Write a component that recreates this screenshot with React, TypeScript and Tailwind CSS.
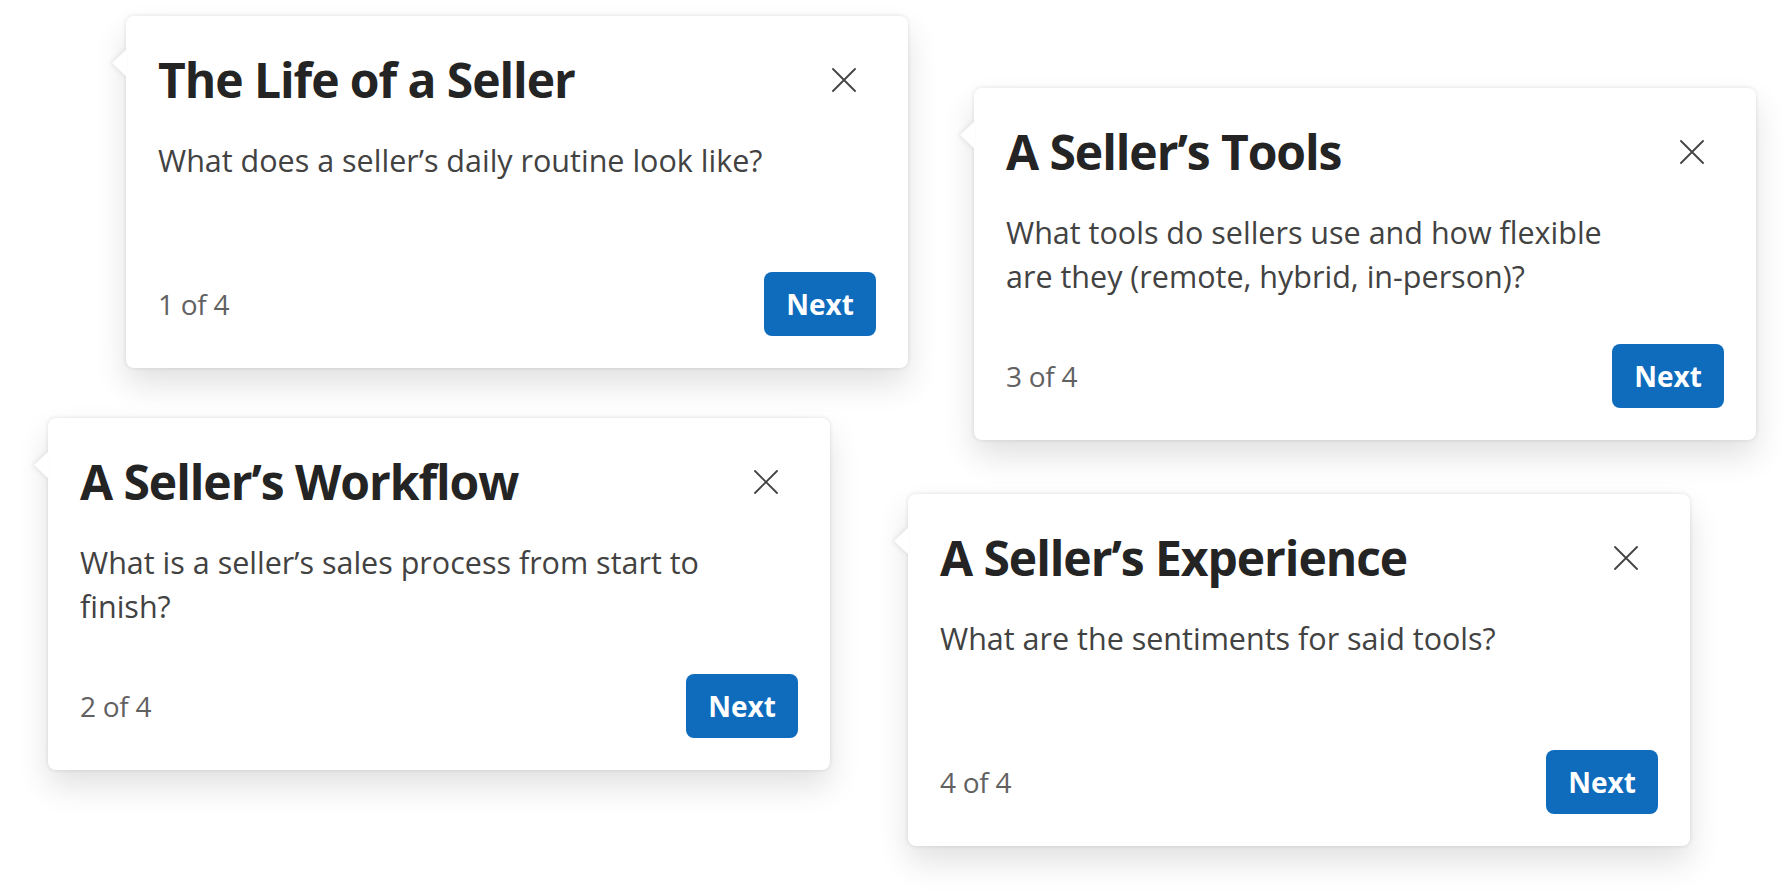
import { ReactNode } from 'react'

interface TeachingCardProps {
  title: string
  body: ReactNode
  step: number
  total?: number
  className?: string
}

function DismissIcon() {
  return (
    <svg width="24" height="24" viewBox="0 0 24 24" fill="none">
      <path d="M1 1L23 23M23 1L1 23" stroke="currentColor" strokeWidth="1.8" strokeLinecap="round" />
    </svg>
  )
}

function TeachingCard({ title, body, step, total = 4, className = '' }: TeachingCardProps) {
  return (
    <div
      className={`relative flex h-[352px] w-[782px] shrink-0 flex-col rounded-[8px] bg-white p-8 shadow-[0_0_4px_rgba(0,0,0,0.12),0_16px_32px_rgba(0,0,0,0.12)] ${className}`}
    >
      <div className="flex items-start justify-between">
        <h2 className="text-[48px] leading-[64px] font-bold tracking-[-0.022em] text-[#242424]">{title}</h2>
        <button className="flex h-16 w-16 items-center justify-center text-[#424242]">
          <DismissIcon />
        </button>
      </div>
      <p className="mt-[26px] max-w-[630px] text-[30.5px] leading-[44px] text-[#424242]">{body}</p>
      <div className="mt-auto flex items-center justify-between">
        <span className="text-[28px] leading-[40px] tracking-[-0.01em] text-[#616161]">
          {step} of {total}
        </span>
        <button className="flex h-16 w-[112px] items-center justify-center rounded-[8px] bg-[#0f6cbd] text-[28px] font-bold text-white">
          Next
        </button>
      </div>
      {/* beak */}
      <div className="absolute top-[33px] left-[-14px] h-[28px] w-[15px] drop-shadow-[-2px_0_2px_rgba(0,0,0,0.08)]">
        <div className="h-full w-full bg-white [clip-path:polygon(0_50%,100%_0,100%_100%)]" />
      </div>
    </div>
  )
}

export default function App() {
  return (
    <div className="flex h-[894px] w-[1788px] overflow-hidden bg-white font-['Open_Sans','Noto_Sans',sans-serif]">
      <div className="flex w-[908px] shrink-0 flex-col">
        <TeachingCard
          className="mt-[16px] ml-[126px]"
          title="The Life of a Seller"
          body="What does a seller’s daily routine look like?"
          step={1}
        />
        <TeachingCard
          className="mt-[50px] ml-[48px]"
          title="A Seller’s Workflow"
          body="What is a seller’s sales process from start to finish?"
          step={2}
        />
      </div>
      <div className="flex flex-col">
        <TeachingCard
          className="mt-[88px] ml-[66px]"
          title="A Seller’s Tools"
          body="What tools do sellers use and how flexible are they (remote, hybrid, in-person)?"
          step={3}
        />
        <TeachingCard
          className="mt-[54px]"
          title="A Seller’s Experience"
          body="What are the sentiments for said tools?"
          step={4}
        />
      </div>
    </div>
  )
}
